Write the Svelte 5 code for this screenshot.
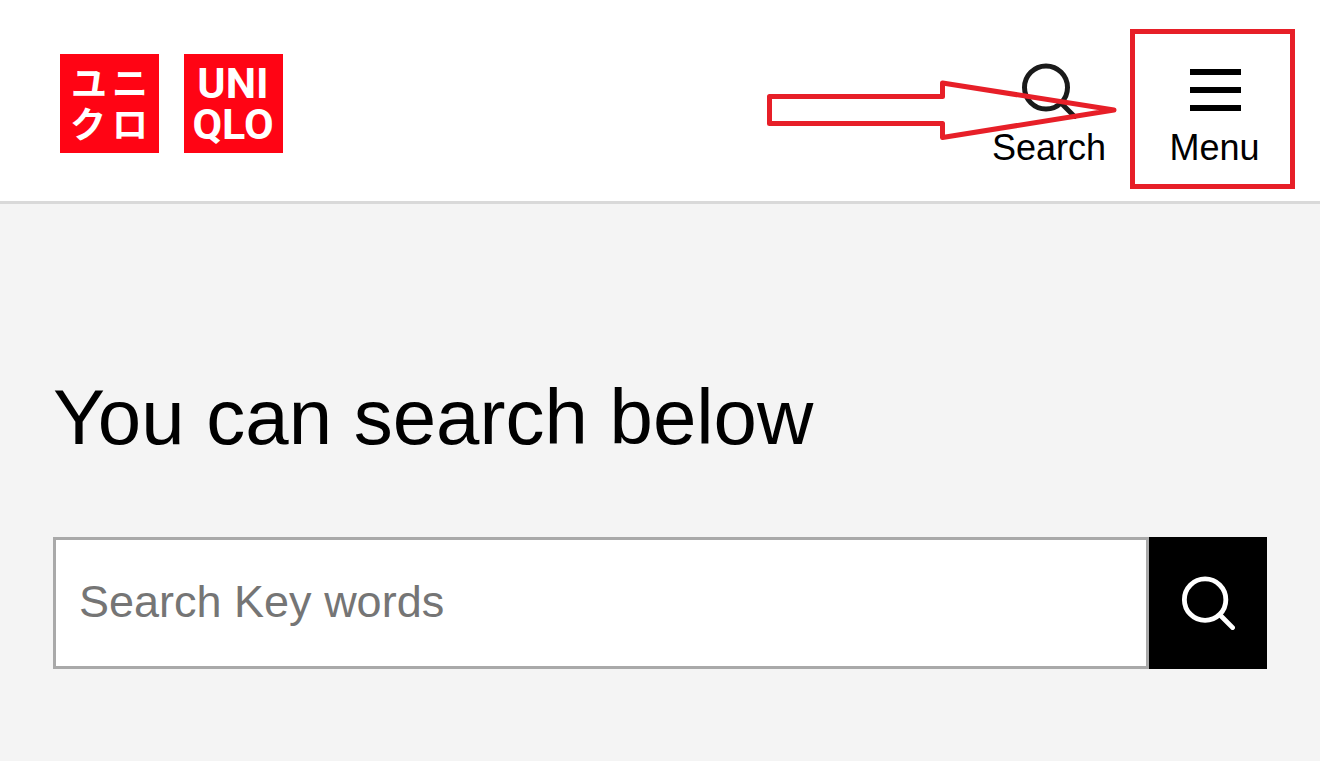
<script>
    let keywords = $state("");
    let menuOpen = $state(false);

    // column and baseline of each character in the katakana tile
    const kana = [
        { char: "ユ", x: 29, y: 43 },
        { char: "ニ", x: 70, y: 43 },
        { char: "ク", x: 28, y: 84 },
        { char: "ロ", x: 70, y: 84 }
    ];

    function handleSubmit(e) {
        e.preventDefault();
        keywords = keywords.trim();
    }
</script>

{#snippet magnifier()}
    <svg class="icon" viewBox="0 0 56 56" aria-hidden="true">
        <circle cx="25" cy="24.5" r="21.5" />
        <path d="M40.5 40.5 L53.5 53.5" />
    </svg>
{/snippet}

<header class="header">
    <a class="logo" href="/" aria-label="UNIQLO home">
        <svg class="tile" viewBox="0 0 99 99" aria-hidden="true">
            <rect width="99" height="99" />
            {#each kana as k}
                <text class="kana" x={k.x} y={k.y}>{k.char}</text>
            {/each}
        </svg>
        <svg class="tile" viewBox="0 0 99 99" aria-hidden="true">
            <rect width="99" height="99" />
            <text class="latin" x="49" y="44">UNI</text>
            <text class="latin" x="49" y="85">QLO</text>
        </svg>
    </a>

    <nav class="actions">
        <button class="action" type="button">
            {@render magnifier()}
            <span>Search</span>
        </button>
        <button
            class="action menu"
            type="button"
            aria-expanded={menuOpen}
            onclick={() => (menuOpen = !menuOpen)}
        >
            <svg class="icon" viewBox="0 0 56 56" aria-hidden="true">
                <path class="bar" d="M3 9 H54 M3 27 H54 M3 45 H54" />
            </svg>
            <span>Menu</span>
        </button>

        <svg class="arrow" viewBox="0 0 352 62" aria-hidden="true">
            <path d="M3.5 16.5 H176.5 V3 L348 30 L176.5 57.5 V43.5 H3.5 Z" />
        </svg>
    </nav>
</header>

<main class="content">
    <h1>You can search below</h1>

    <form class="search" onsubmit={handleSubmit}>
        <input
            type="text"
            bind:value={keywords}
            placeholder="Search Key words"
            aria-label="Search Key words"
        />
        <button type="submit" aria-label="Search">
            {@render magnifier()}
        </button>
    </form>
</main>

<style>
    :global(body) {
        background: #f4f4f4;
        color: #000;
        font-family: "Liberation Sans", Arial, sans-serif;
    }

    button {
        margin: 0;
        border: 0;
        font-family: inherit;
        color: inherit;
        cursor: pointer;
    }

    .header {
        display: flex;
        justify-content: space-between;
        align-items: flex-start;
        padding: 29px 25px 12px 60px;
        background: #fff;
        border-bottom: 3px solid #d9d9d9;
    }

    .logo {
        display: flex;
        gap: 25px;
        padding-top: 25px;
    }

    .tile {
        display: block;
        width: 99px;
        height: 99px;
    }

    .tile rect {
        fill: #ff0414;
    }

    .tile text {
        fill: #fff;
        text-anchor: middle;
        font-weight: 700;
    }

    .kana {
        font-family: "Noto Sans CJK JP", sans-serif;
        font-size: 36px;
    }

    .latin {
        font-family: "Liberation Sans Narrow", Roboto, sans-serif;
        font-size: 43px;
    }

    .actions {
        position: relative;
        display: flex;
    }

    .action {
        display: flex;
        flex-direction: column;
        align-items: center;
        gap: 8px;
        box-sizing: border-box;
        width: 162px;
        height: 160px;
        padding: 34px 0 0;
        background: none;
        font-size: 36px;
        line-height: 42px;
    }

    .menu {
        width: 165px;
        padding: 29px 0 0 4px;
        border: 5px solid #e71f28;
    }

    .icon {
        width: 56px;
        height: 56px;
        fill: none;
        stroke: #1a1a1a;
        stroke-width: 5;
        stroke-linecap: round;
    }

    .icon .bar {
        stroke: #000;
        stroke-width: 6;
        stroke-linecap: butt;
    }

    /* callout pointing at the menu button, drawn over the search action */
    .arrow {
        position: absolute;
        top: 51px;
        right: 177px;
        width: 352px;
        height: 62px;
        fill: none;
        stroke: #e71f28;
        stroke-width: 5;
        stroke-linejoin: round;
        pointer-events: none;
    }

    .content {
        padding: 168px 53px 92px;
    }

    h1 {
        margin: 0 0 75px;
        font-size: 78px;
        font-weight: 400;
        line-height: 90px;
    }

    .search {
        display: flex;
        height: 132px;
    }

    .search input {
        flex: 1;
        min-width: 0;
        box-sizing: border-box;
        margin: 0;
        padding: 0 23px 2px;
        border: 3px solid #a9a9a9;
        border-radius: 0;
        background: #fff;
        font-family: inherit;
        font-size: 45px;
    }

    .search input::placeholder {
        color: #757575;
        opacity: 1;
    }

    .search button {
        display: flex;
        align-items: center;
        justify-content: center;
        width: 118px;
        padding: 0;
        background: #000;
    }

    .search .icon {
        width: 54px;
        height: 54px;
        stroke: #fff;
    }
</style>
